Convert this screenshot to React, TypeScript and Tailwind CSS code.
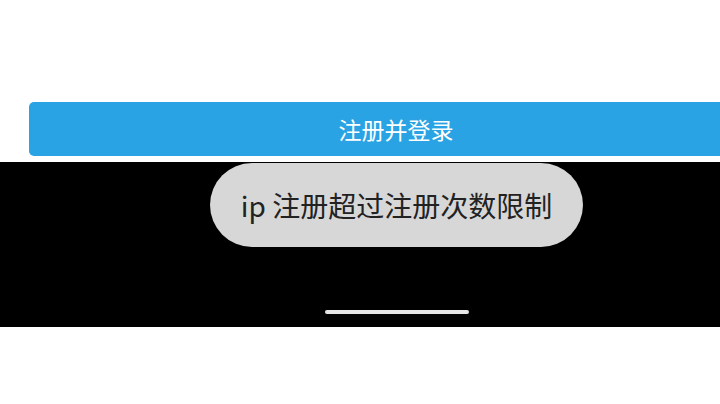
const App = () => {
	return (
		<div
			className="w-[720px] h-[404px] overflow-hidden bg-white pt-[102px]"
			style={{ fontFamily: '"Noto Sans CJK SC", "Noto Sans", sans-serif' }}
		>
			{/* register button */}
			<button className="ml-[29px] w-[734px] h-[54px] shrink-0 rounded-[5px] bg-[#29a3e3] text-white text-[23px] flex items-center justify-center">
				注册并登录
			</button>

			{/* dark area with toast + home indicator */}
			<div className="mt-[6px] h-[165px] bg-black flex flex-col">
				<div className="ml-[210px] mt-[1px] w-[373px] h-[84px] rounded-full bg-[#d7d7d7] flex items-center justify-center text-[28px] text-[#222222]">
					ip 注册超过注册次数限制
				</div>
				<div className="ml-[325px] mt-[63px] w-[144px] h-[4px] rounded-full bg-[#e6e6e6]" />
			</div>
		</div>
	)
}

export default App
